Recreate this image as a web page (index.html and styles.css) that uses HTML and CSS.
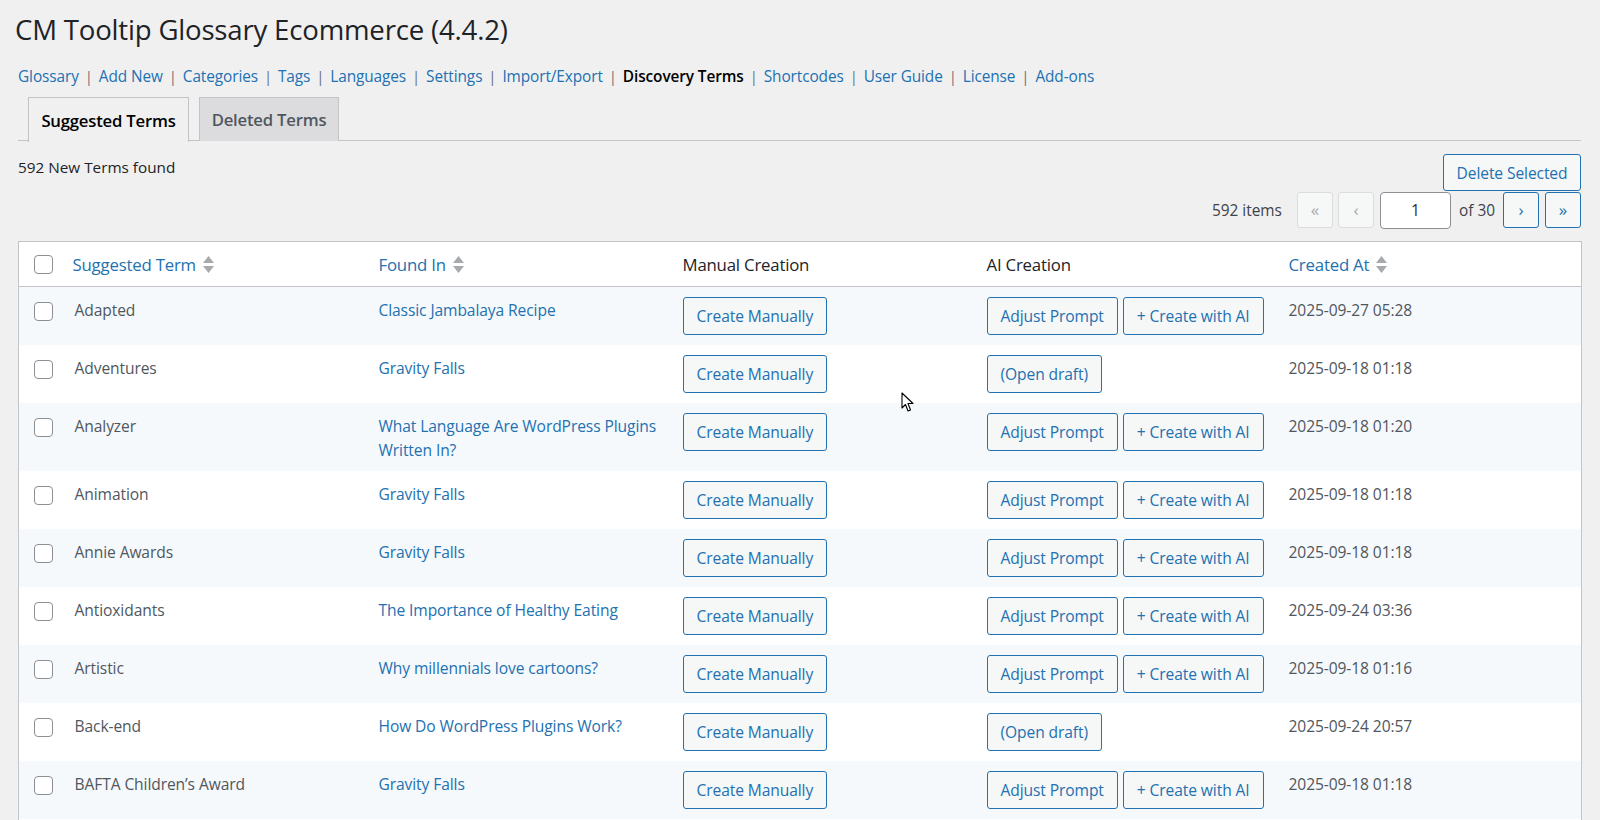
FILE: index.html
```html
<!DOCTYPE html>
<html>
<head>
<meta charset="utf-8">
<link rel="stylesheet" href="styles.css">
</head>
<body>
<div class="wrap">
  <h1 class="title">CM Tooltip Glossary Ecommerce (4.4.2)</h1>
  <nav class="subnav">
    <a href="#">Glossary</a><span class="sep">|</span><a href="#">Add New</a><span class="sep">|</span><a href="#">Categories</a><span class="sep">|</span><a href="#">Tags</a><span class="sep">|</span><a href="#">Languages</a><span class="sep">|</span><a href="#">Settings</a><span class="sep">|</span><a href="#">Import/Export</a><span class="sep">|</span><b class="current">Discovery Terms</b><span class="sep">|</span><a href="#">Shortcodes</a><span class="sep">|</span><a href="#">User Guide</a><span class="sep">|</span><a href="#">License</a><span class="sep">|</span><a href="#">Add-ons</a>
  </nav>
  <div class="tabs">
    <span class="tab active">Suggested Terms</span>
    <span class="tab deleted">Deleted Terms</span>
  </div>
  <div class="toolbar">
    <div class="found">592 New Terms found</div>
    <div class="actions">
      <button class="btn del">Delete Selected</button>
      <div class="pager">
        <span class="items">592 items</span>
        <span class="pbtn disabled">«</span>
        <span class="pbtn disabled prev">‹</span>
        <input class="page-input" type="text" value="1">
        <span class="of">of 30</span>
        <span class="pbtn">›</span>
        <span class="pbtn last">»</span>
      </div>
    </div>
  </div>
  <table class="terms">
    <colgroup>
      <col class="c-cb"><col class="c-term"><col class="c-found"><col class="c-man"><col class="c-ai"><col class="c-date">
    </colgroup>
    <thead>
      <tr>
        <th class="cb"><span class="check"></span></th>
        <th class="first"><a class="sort" href="#">Suggested Term</a><svg class="arrows" width="11" height="18" viewBox="0 0 11 18"><polygon points="5.5,0 11,7 0,7" fill="#a7aaad"/><polygon points="0,10 11,10 5.5,17" fill="#a7aaad"/></svg></th>
        <th><a class="sort" href="#">Found In</a><svg class="arrows" width="11" height="18" viewBox="0 0 11 18"><polygon points="5.5,0 11,7 0,7" fill="#a7aaad"/><polygon points="0,10 11,10 5.5,17" fill="#a7aaad"/></svg></th>
        <th class="plain">Manual Creation</th>
        <th class="plain">AI Creation</th>
        <th><a class="sort" href="#">Created At</a><svg class="arrows" width="11" height="18" viewBox="0 0 11 18"><polygon points="5.5,0 11,7 0,7" fill="#a7aaad"/><polygon points="0,10 11,10 5.5,17" fill="#a7aaad"/></svg></th>
      </tr>
    </thead>
    <tbody>
      <tr class="alt">
        <td class="cb"><span class="check"></span></td>
        <td class="term">Adapted</td>
        <td class="src"><a href="#">Classic Jambalaya Recipe</a></td>
        <td class="act"><button class="btn">Create Manually</button></td>
        <td class="act"><button class="btn">Adjust Prompt</button><button class="btn">+ Create with AI</button></td>
        <td class="date">2025-09-27 05:28</td>
      </tr>
      <tr>
        <td class="cb"><span class="check"></span></td>
        <td class="term">Adventures</td>
        <td class="src"><a href="#">Gravity Falls</a></td>
        <td class="act"><button class="btn">Create Manually</button></td>
        <td class="act"><button class="btn">(Open draft)</button></td>
        <td class="date">2025-09-18 01:18</td>
      </tr>
      <tr class="alt">
        <td class="cb"><span class="check"></span></td>
        <td class="term">Analyzer</td>
        <td class="src"><a href="#">What Language Are WordPress Plugins Written In?</a></td>
        <td class="act"><button class="btn">Create Manually</button></td>
        <td class="act"><button class="btn">Adjust Prompt</button><button class="btn">+ Create with AI</button></td>
        <td class="date">2025-09-18 01:20</td>
      </tr>
      <tr>
        <td class="cb"><span class="check"></span></td>
        <td class="term">Animation</td>
        <td class="src"><a href="#">Gravity Falls</a></td>
        <td class="act"><button class="btn">Create Manually</button></td>
        <td class="act"><button class="btn">Adjust Prompt</button><button class="btn">+ Create with AI</button></td>
        <td class="date">2025-09-18 01:18</td>
      </tr>
      <tr class="alt">
        <td class="cb"><span class="check"></span></td>
        <td class="term">Annie Awards</td>
        <td class="src"><a href="#">Gravity Falls</a></td>
        <td class="act"><button class="btn">Create Manually</button></td>
        <td class="act"><button class="btn">Adjust Prompt</button><button class="btn">+ Create with AI</button></td>
        <td class="date">2025-09-18 01:18</td>
      </tr>
      <tr>
        <td class="cb"><span class="check"></span></td>
        <td class="term">Antioxidants</td>
        <td class="src"><a href="#">The Importance of Healthy Eating</a></td>
        <td class="act"><button class="btn">Create Manually</button></td>
        <td class="act"><button class="btn">Adjust Prompt</button><button class="btn">+ Create with AI</button></td>
        <td class="date">2025-09-24 03:36</td>
      </tr>
      <tr class="alt">
        <td class="cb"><span class="check"></span></td>
        <td class="term">Artistic</td>
        <td class="src"><a href="#">Why millennials love cartoons?</a></td>
        <td class="act"><button class="btn">Create Manually</button></td>
        <td class="act"><button class="btn">Adjust Prompt</button><button class="btn">+ Create with AI</button></td>
        <td class="date">2025-09-18 01:16</td>
      </tr>
      <tr>
        <td class="cb"><span class="check"></span></td>
        <td class="term">Back-end</td>
        <td class="src"><a href="#">How Do WordPress Plugins Work?</a></td>
        <td class="act"><button class="btn">Create Manually</button></td>
        <td class="act"><button class="btn">(Open draft)</button></td>
        <td class="date">2025-09-24 20:57</td>
      </tr>
      <tr class="alt">
        <td class="cb"><span class="check"></span></td>
        <td class="term">BAFTA Children’s Award</td>
        <td class="src"><a href="#">Gravity Falls</a></td>
        <td class="act"><button class="btn">Create Manually</button></td>
        <td class="act"><button class="btn">Adjust Prompt</button><button class="btn">+ Create with AI</button></td>
        <td class="date">2025-09-18 01:18</td>
      </tr>
      <tr class="filler">
        <td></td><td></td><td></td><td></td><td></td><td></td>
      </tr>
    </tbody>
  </table>
</div>
<svg class="cursor" width="14" height="21" viewBox="0 0 14 21"><path d="M1 1 L1 16 L4.5 12.5 L7 19 L9.5 18 L7 11.5 L12 11.5 Z" fill="#fff" stroke="#000" stroke-width="1.1" stroke-linejoin="round"/></svg>
</body>
</html>
```

FILE: styles.css
```css
* { box-sizing: border-box; }
html, body { margin: 0; padding: 0; }
body {
  background: #f0f0f1;
  font-family: "Open Sans", "Noto Sans", sans-serif;
  color: #1d2327;
  font-size: 15.6px;
  overflow: hidden;
  height: 820px;
}
.wrap { padding: 0 19px 0 18px; }
.title {
  font-weight: 400;
  font-size: 27.6px;
  margin: 0 0 0 -3px;
  padding: 11px 0 0;
  line-height: 36px;
  color: #1d2327;
  letter-spacing: -0.2px;
}
.subnav {
  margin-top: 17px;
  line-height: 26px;
  font-size: 15.4px;
  white-space: nowrap;
  letter-spacing: -0.1px;
  display: flex;
}
.subnav a { color: #2271b1; text-decoration: none; }
.subnav .current { color: #000; font-weight: 600; }
.subnav .sep { color: #646970; width: 20px; text-align: center; display: inline-block; font-size: 14px; }
.tabs {
  display: flex;
  gap: 10px;
  margin-top: 7px;
  padding-left: 10px;
  border-bottom: 1px solid #c3c4c7;
  height: 44px;
}
.tab {
  display: flex;
  align-items: center;
  justify-content: center;
  height: 44px;
  font-size: 16.7px;
  font-weight: 600;
  color: #50575e;
  background: #dcdcde;
  border: 1px solid #c3c4c7;
  border-bottom: none;
  letter-spacing: -0.2px;
  white-space: nowrap;
}
.tab.active {
  background: #f0f0f1;
  color: #000;
  height: 45px;
  margin-bottom: -1px;
  width: 161px;
}
.tab.deleted { width: 140px; }
.toolbar {
  display: flex;
  justify-content: space-between;
  margin-top: 13px;
}
.found { font-size: 15.3px; color: #1d2327; line-height: 26px; }
.actions { display: flex; flex-direction: column; align-items: flex-end; }
.btn {
  font-family: inherit;
  font-size: 15.6px;
  color: #2271b1;
  background: #f6f7f7;
  border: 1px solid #2271b1;
  border-radius: 3px;
  height: 38px;
  padding: 0 13px;
  line-height: 36px;
  cursor: pointer;
  letter-spacing: -0.1px;
  white-space: nowrap;
}
.btn.del { width: 138px; height: 37px; padding: 0; }
.pager {
  display: flex;
  align-items: center;
  margin-top: 1px;
  height: 36px;
}
.items { margin-right: 15px; color: #3c434a; font-size: 15.4px; }
.pbtn {
  width: 36px;
  height: 36px;
  display: flex;
  align-items: center;
  justify-content: center;
  border: 1px solid #2271b1;
  border-radius: 3px;
  background: #f6f7f7;
  color: #2271b1;
  font-size: 17px;
  padding-bottom: 2px;
}
.pbtn.disabled { border-color: #dcdcde; color: #a7aaad; background: #f6f7f7; }
.pbtn.prev { margin-left: 5px; }
.pbtn.last { margin-left: 6px; }
.page-input {
  width: 71px;
  height: 37px;
  margin-left: 6px;
  border: 1px solid #8c8f94;
  border-radius: 4px;
  text-align: center;
  font-family: inherit;
  font-size: 15.6px;
  color: #2c3338;
  background: #fff;
}
.of { color: #3c434a; font-size: 15.4px; margin: 0 8px; }
.terms {
  margin-top: 13px;
  width: 1563px;
  border-collapse: collapse;
  table-layout: fixed;
  background: #fff;
  border: 1px solid #c3c4c7;
}
.c-cb { width: 46px; }
.c-term { width: 304px; }
.c-found { width: 304px; }
.c-man { width: 304px; }
.c-ai { width: 302px; }
.c-date { width: 303px; }
.terms th {
  text-align: left;
  font-weight: 400;
  font-size: 16.8px;
  height: 45px;
  padding: 0 10px;
  border-bottom: 1px solid #c3c4c7;
  letter-spacing: -0.2px;
  white-space: nowrap;
}
.terms th .sort { color: #2271b1; text-decoration: none; }
.terms th.plain { color: #1d2327; }
.terms th.first { padding-left: 8px; }
.arrows { margin-left: 7px; vertical-align: -3px; }
.terms td {
  vertical-align: top;
  padding: 11px 10px 9px;
  font-size: 15.6px;
  line-height: 24px;
  letter-spacing: -0.1px;
}
.terms td.act { padding-top: 10px; padding-bottom: 10px; }
.terms tbody tr.alt { background: #f6f9fc; }
.terms tr.filler td { height: 40px; padding: 0; }
.terms td a { color: #2271b1; text-decoration: none; }
.terms td.term { color: #50575e; }
.terms td.date { color: #50575e; }
.terms td .btn + .btn { margin-left: 5px; }
.terms td .btn { vertical-align: top; }
.terms .cb { padding-left: 15px; padding-right: 0; }
.terms th.cb { vertical-align: middle; }
.terms td.cb { padding-top: 15px; }
.check {
  display: block;
  width: 19px;
  height: 19px;
  border: 1px solid #8c8f94;
  border-radius: 4px;
  background: #fff;
}
.cursor { position: absolute; left: 901px; top: 392px; }
```
